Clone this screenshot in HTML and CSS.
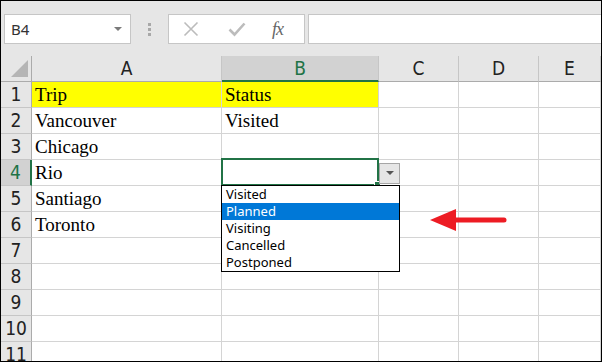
FILE: index.html
```html
<!DOCTYPE html>
<html lang="en">
<head>
    <meta charset="UTF-8">
    <title>Trip Status</title>
    <link rel="stylesheet" href="styles.css">
</head>
<body>
    <div class="frame">
        <div class="toolbar">
            <div class="name-box">
                <span>B4</span>
                <svg class="nb-arrow" width="8" height="5" viewBox="0 0 8 5"><polygon points="0,0 8,0 4,4" fill="#7a7a7a"/></svg>
            </div>
            <div class="dots">
                <i></i><i></i><i></i>
            </div>
            <div class="fx-buttons">
                <svg class="btn-cancel" width="16" height="16" viewBox="0 0 16 16"><path d="M1.5 1.5 L14.5 14.5 M14.5 1.5 L1.5 14.5" stroke="#bcbcbc" stroke-width="1.6" fill="none"/></svg>
                <svg class="btn-enter" width="18" height="16" viewBox="0 0 18 16"><path d="M1.5 8.5 L6.5 13.5 L16.5 2.5" stroke="#bcbcbc" stroke-width="2.6" fill="none"/></svg>
                <span class="fx">fx</span>
            </div>
            <div class="formula"></div>
        </div>

        <div class="grid">
            <div class="row head">
                <div class="rh corner">
                    <svg width="30" height="25" viewBox="0 0 30 25"><polygon points="10,21 27,21 27,4" fill="#b5b5b5"/></svg>
                </div>
                <div class="c ca">A</div>
                <div class="c cb sel">B</div>
                <div class="c cc">C</div>
                <div class="c cd">D</div>
                <div class="c ce">E</div>
            </div>
            <div class="row">
                <div class="rh">1</div>
                <div class="c ca fill">Trip</div>
                <div class="c cb fill">Status</div>
                <div class="c cc"></div><div class="c cd"></div><div class="c ce"></div>
            </div>
            <div class="row">
                <div class="rh">2</div>
                <div class="c ca">Vancouver</div>
                <div class="c cb">Visited</div>
                <div class="c cc"></div><div class="c cd"></div><div class="c ce"></div>
            </div>
            <div class="row">
                <div class="rh">3</div>
                <div class="c ca">Chicago</div>
                <div class="c cb"></div>
                <div class="c cc"></div><div class="c cd"></div><div class="c ce"></div>
            </div>
            <div class="row">
                <div class="rh sel">4</div>
                <div class="c ca">Rio</div>
                <div class="c cb"></div>
                <div class="c cc"></div><div class="c cd"></div><div class="c ce"></div>
            </div>
            <div class="row">
                <div class="rh">5</div>
                <div class="c ca">Santiago</div>
                <div class="c cb"></div>
                <div class="c cc"></div><div class="c cd"></div><div class="c ce"></div>
            </div>
            <div class="row">
                <div class="rh">6</div>
                <div class="c ca">Toronto</div>
                <div class="c cb"></div>
                <div class="c cc"></div><div class="c cd"></div><div class="c ce"></div>
            </div>
            <div class="row">
                <div class="rh">7</div>
                <div class="c ca"></div><div class="c cb"></div>
                <div class="c cc"></div><div class="c cd"></div><div class="c ce"></div>
            </div>
            <div class="row">
                <div class="rh">8</div>
                <div class="c ca"></div><div class="c cb"></div>
                <div class="c cc"></div><div class="c cd"></div><div class="c ce"></div>
            </div>
            <div class="row">
                <div class="rh">9</div>
                <div class="c ca"></div><div class="c cb"></div>
                <div class="c cc"></div><div class="c cd"></div><div class="c ce"></div>
            </div>
            <div class="row">
                <div class="rh">10</div>
                <div class="c ca"></div><div class="c cb"></div>
                <div class="c cc"></div><div class="c cd"></div><div class="c ce"></div>
            </div>
            <div class="row">
                <div class="rh">11</div>
                <div class="c ca"></div><div class="c cb"></div>
                <div class="c cc"></div><div class="c cd"></div><div class="c ce"></div>
            </div>
        </div>

        <!-- active cell, validation dropdown and callout arrow sit over the grid -->
        <div class="selection"><span class="handle"></span></div>
        <div class="dd-button">
            <svg width="8" height="5" viewBox="0 0 8 5"><polygon points="0,0 8,0 4,4" fill="#555"/></svg>
        </div>
        <ul class="dd-list">
            <li>Visited</li>
            <li class="active">Planned</li>
            <li>Visiting</li>
            <li>Cancelled</li>
            <li>Postponed</li>
        </ul>
        <svg class="callout" width="82" height="26" viewBox="0 0 82 26">
            <polygon points="2,13 28,2 28,24" fill="#ed1c24"/>
            <line x1="26" y1="13" x2="76" y2="13" stroke="#ed1c24" stroke-width="5" stroke-linecap="round"/>
        </svg>
    </div>
</body>
</html>
```

FILE: styles.css
```css
body {
    margin: 0;
    font-family: "Liberation Sans", Arial, sans-serif;
}
.frame {
    position: relative;
    width: 602px;
    height: 362px;
    box-sizing: border-box;
    border: 1px solid #000;
    overflow: hidden;
    background: #fff;
}

/* formula bar */
.toolbar {
    display: flex;
    height: 55px;
    box-sizing: border-box;
    padding: 13px 0 0 3px;
    background: #e6e6e6;
}
.name-box {
    display: flex;
    align-items: center;
    justify-content: space-between;
    width: 127px;
    height: 30px;
    box-sizing: border-box;
    padding: 0 8px 0 6px;
    background: #fff;
    border: 1px solid #c6c6c6;
    font-family: "Noto Sans", sans-serif;
    font-size: 15px;
    color: #333;
}
.dots {
    width: 37px;
    height: 30px;
    display: flex;
    flex-direction: column;
    align-items: center;
    justify-content: center;
    gap: 2px;
}
.dots i {
    width: 3px;
    height: 3px;
    background: #a8a8a8;
}
.fx-buttons {
    display: flex;
    align-items: center;
    width: 137px;
    height: 30px;
    box-sizing: border-box;
    padding-left: 14px;
    background: #fff;
    border: 1px solid #c6c6c6;
}
.btn-enter {
    margin-left: 29px;
}
.fx {
    margin-left: 26px;
    font-family: "Liberation Serif", serif;
    font-style: italic;
    font-size: 18px;
    color: #666;
    letter-spacing: -1px;
}
.formula {
    flex: 1;
    height: 30px;
    margin: 0 -3px 0 3px;
    box-sizing: border-box;
    background: #fff;
    border: 1px solid #c6c6c6;
}

/* sheet */
.row {
    display: flex;
    height: 26px;
}
.rh, .c {
    box-sizing: border-box;
    height: 26px;
    border-right: 1px solid #d4d4d4;
    border-bottom: 1px solid #d4d4d4;
}
.rh {
    width: 31px;
    flex: none;
    background: #e6e6e6;
    border-right-color: #ababab;
    border-bottom-color: #c6c6c6;
    font-family: "Liberation Sans Narrow", "DejaVu Sans Condensed", sans-serif;
    font-size: 19px;
    line-height: 25px;
    text-align: center;
    color: #222;
}
.rh.sel {
    background: #d2d2d2;
    border-right: 2px solid #217346;
    color: #217346;
}
.c {
    flex: none;
    padding-left: 3px;
    font-family: "Liberation Serif", "Times New Roman", serif;
    font-size: 19px;
    line-height: 25px;
    color: #000;
    white-space: nowrap;
}
.ca { width: 190px; }
.cb { width: 157px; }
.cc { width: 80px; }
.cd { width: 80px; }
.ce { flex: 1; }
.fill { background: #ffff00; }

.head .c {
    background: #e6e6e6;
    border-right-color: #c6c6c6;
    border-bottom-color: #ababab;
    padding-left: 0;
    text-align: center;
    font-family: "Liberation Sans Narrow", "DejaVu Sans Condensed", sans-serif;
    color: #222;
}
.head .c.sel {
    background: #d2d2d2;
    border-bottom: 2px solid #217346;
    color: #217346;
}
.corner {
    border-bottom-color: #ababab;
}
.corner svg {
    display: block;
}

/* overlays */
.selection {
    position: absolute;
    left: 220px;
    top: 157px;
    width: 158px;
    height: 28px;
    box-sizing: border-box;
    border: 2px solid #217346;
}
.handle {
    position: absolute;
    right: -4px;
    bottom: -4px;
    width: 5px;
    height: 5px;
    background: #217346;
    border: 1px solid #fff;
}
.dd-button {
    position: absolute;
    left: 378px;
    top: 162px;
    width: 21px;
    height: 21px;
    box-sizing: border-box;
    border: 1px solid #a6a6a6;
    background: #e6e6e6;
    display: flex;
    align-items: center;
    justify-content: center;
}
.dd-list {
    position: absolute;
    left: 220px;
    top: 184px;
    width: 179px;
    margin: 0;
    padding: 0;
    list-style: none;
    box-sizing: border-box;
    border: 1px solid #000;
    background: #fff;
    font-family: "Noto Sans", sans-serif;
    font-size: 13px;
}
.dd-list li {
    height: 17px;
    line-height: 17px;
    padding-left: 4px;
    color: #000;
}
.dd-list li.active {
    background: #0078d7;
    color: #fff;
}
.callout {
    position: absolute;
    left: 427px;
    top: 206px;
}
```
